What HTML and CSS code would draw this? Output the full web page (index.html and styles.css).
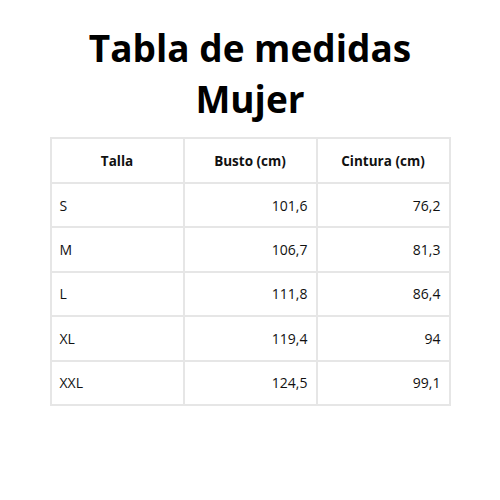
FILE: index.html
```html
<!DOCTYPE html>
<html>
<head>
<meta charset="utf-8">
<link rel="stylesheet" href="styles.css">
</head>
<body>
<div class="page">
  <h1 class="title">Tabla de medidas<br>Mujer</h1>
  <table class="sizes">
    <thead>
      <tr><th>Talla</th><th>Busto (cm)</th><th>Cintura (cm)</th></tr>
    </thead>
    <tbody>
      <tr><td>S</td><td class="num">101,6</td><td class="num">76,2</td></tr>
      <tr><td>M</td><td class="num">106,7</td><td class="num">81,3</td></tr>
      <tr><td>L</td><td class="num">111,8</td><td class="num">86,4</td></tr>
      <tr><td>XL</td><td class="num">119,4</td><td class="num">94</td></tr>
      <tr><td>XXL</td><td class="num">124,5</td><td class="num">99,1</td></tr>
    </tbody>
  </table>
</div>
</body>
</html>
```
FILE: styles.css
```css
html, body {
  margin: 0;
  padding: 0;
  background: #fff;
}
body {
  font-family: "Open Sans", "DejaVu Sans", sans-serif;
  color: #111;
}
.page {
  width: 500px;
  padding-top: 22px;
  display: flex;
  flex-direction: column;
  align-items: center;
}
.title {
  margin: 0;
  font-size: 37px;
  font-weight: 700;
  line-height: 51px;
  text-align: center;
  color: #000;
}
.sizes {
  margin-top: 13px;
  width: 401px;
  border-collapse: collapse;
  table-layout: fixed;
  font-size: 14px;
}
.sizes th, .sizes td {
  border: 2px solid #e6e6e6;
  height: 42.4px;
  padding: 0 8px;
}
.sizes th {
  font-size: 13.5px;
  font-weight: 700;
  text-align: center;
  height: 43px;
}
.sizes td {
  text-align: left;
  font-weight: 400;
}
.sizes td.num {
  text-align: right;
}
```
